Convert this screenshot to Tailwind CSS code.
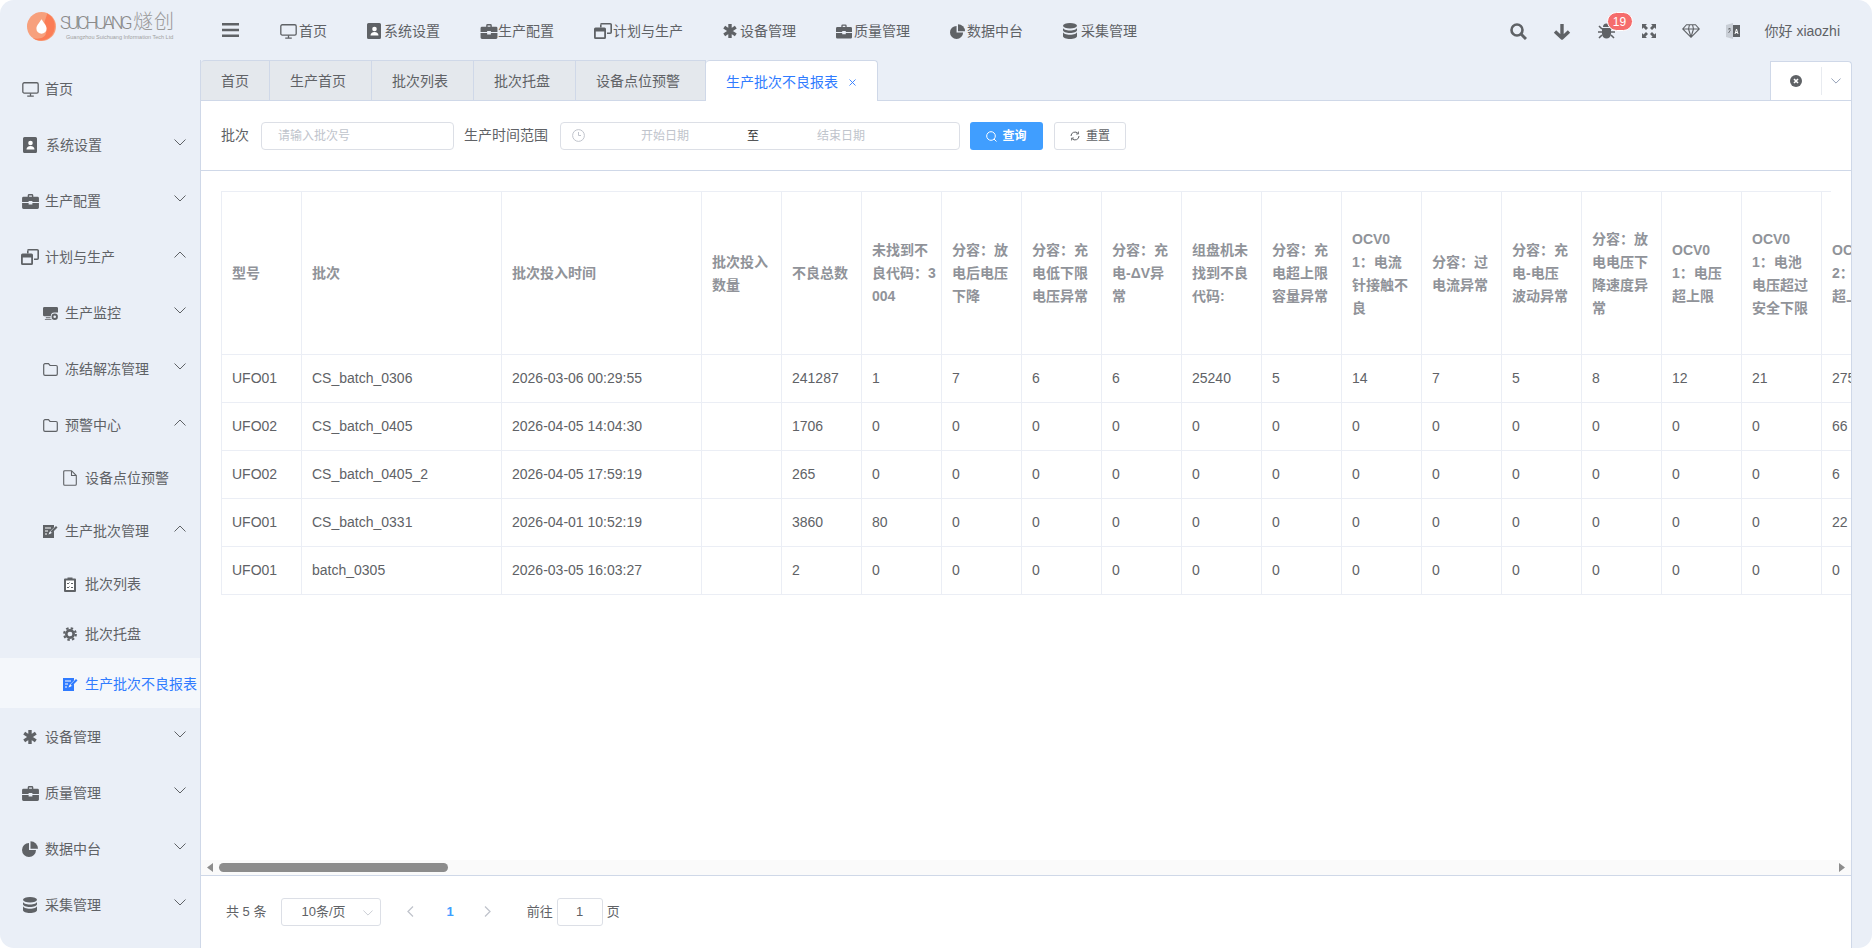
<!DOCTYPE html>
<html lang="zh-CN">
<head>
  <meta charset="UTF-8" />
  <title>生产批次不良报表</title>
  <script src="https://cdn.jsdelivr.net/npm/@tailwindcss/browser@4"></script>
</head>
<body class="bg-white">
  <!-- icon sprites -->
  <svg class="hidden">
    <symbol id="i-monitor" viewBox="0 0 18 16"><rect x="0.8" y="0.8" width="16.4" height="11" rx="1.5" fill="none" stroke="currentColor" stroke-width="1.4"/><path d="M5.5 15h7M9 12v3" fill="none" stroke="currentColor" stroke-width="1.4"/></symbol>
    <symbol id="i-addr" viewBox="0 0 14 16"><path d="M1.5 0h11A1.5 1.5 0 0 1 14 1.5v13a1.5 1.5 0 0 1-1.5 1.5h-11A1.5 1.5 0 0 1 0 14.500v-13A1.500 1.500 0 0 1 1.500 0z" fill="currentColor"/><circle cx="7.500" cy="6" r="2.300" fill="#fff"/><path d="M3.500 12.500c0-2.300 1.700-3.500 4-3.500s4 1.200 4 3.500z" fill="#fff"/></symbol>
    <symbol id="i-case" viewBox="0 0 18 16"><path d="M6 3V1.500A1.500 1.500 0 0 1 7.500 0h3A1.500 1.500 0 0 1 12 1.500V3h4.500A1.500 1.500 0 0 1 18 4.500V8.500H11V7.500H7v1H0V4.500A1.500 1.500 0 0 1 1.500 3zM7.500 1.500V3h3V1.500zM0 9.700h7v1.500h4V9.700h7v4.800a1.500 1.500 0 0 1-1.500 1.500h-15A1.500 1.500 0 0 1 0 14.500z" fill="currentColor" fill-rule="evenodd"/></symbol>
    <symbol id="i-restore" viewBox="0 0 18 16"><path d="M6.800 1.500A1 1 0 0 1 7.800.8h8.400a1 1 0 0 1 1 1v7.400a1 1 0 0 1-1 1H13" fill="none" stroke="currentColor" stroke-width="1.600"/><path d="M6.800 1.500v3" stroke="currentColor" stroke-width="1.600"/><path d="M1.500 4.500h9A1.500 1.500 0 0 1 12 6v8.500a1.500 1.500 0 0 1-1.500 1.500h-9A1.500 1.500 0 0 1 0 14.500V6a1.500 1.500 0 0 1 1.500-1.500zM1.800 8.500v5.700h8.400V8.500z" fill="currentColor" fill-rule="evenodd"/></symbol>
    <symbol id="i-star" viewBox="0 0 14 16"><path d="M7 1v14M1.200 4.200l11.600 7.600M1.200 11.800l11.600-7.600" stroke="currentColor" stroke-width="3.400" fill="none"/></symbol>
    <symbol id="i-pie" viewBox="0 0 16 16"><path d="M7 2a7 7 0 1 0 7 7H7z" fill="currentColor"/><path d="M8.500 0.200A7.500 7.500 0 0 1 16 7.700H8.500z" fill="currentColor"/></symbol>
    <symbol id="i-db" viewBox="0 0 14 16"><ellipse cx="7" cy="2.800" rx="7" ry="2.800" fill="currentColor"/><path d="M0 4.800c0 1.600 3.100 2.700 7 2.700s7-1.100 7-2.700v2.400c0 1.600-3.100 2.700-7 2.700s-7-1.100-7-2.700zM0 9.100c0 1.600 3.100 2.700 7 2.700s7-1.100 7-2.700v4.100c0 1.600-3.100 2.800-7 2.800s-7-1.200-7-2.800z" fill="currentColor"/></symbol>
    <symbol id="i-server" viewBox="0 0 16 16"><path d="M1.500 1h13A1.500 1.500 0 0 1 16 2.500V7h-4a4 4 0 0 0-3.700 4H1.500A1.500 1.500 0 0 1 0 9.500v-7A1.500 1.500 0 0 1 1.500 1zM3 12h5v1H3zM2 14h7v1H2z" fill="currentColor"/><circle cx="12.500" cy="11.500" r="2.400" fill="none" stroke="currentColor" stroke-width="2"/></symbol>
    <symbol id="i-folder" viewBox="0 0 15 13"><path d="M.7 2A1.300 1.300 0 0 1 2 .7h3.500L7 2.500h6A1.300 1.300 0 0 1 14.300 3.800V11A1.300 1.300 0 0 1 13 12.300H2A1.300 1.300 0 0 1 .7 11z" fill="none" stroke="currentColor" stroke-width="1.200"/></symbol>
    <symbol id="i-file" viewBox="0 0 14 16"><path d="M.7 1.700a1 1 0 0 1 1-1h6.800l4.800 4.800v8.800a1 1 0 0 1-1 1H1.700a1 1 0 0 1-1-1zM8.500.7v4.800h4.800" fill="none" stroke="currentColor" stroke-width="1.100"/></symbol>
    <symbol id="i-edit" viewBox="0 0 15 15"><path d="M0 1h11v2.500L6.500 8 5.500 10.500 8 9.500 11 6.500V14H0z" fill="currentColor"/><path d="M2 4h6M2 7h3M2 10h2" stroke="#fff" stroke-width="1"/><path d="M7.500 7.500L13 2l1.500 1.500L9 9z" fill="currentColor"/></symbol>
    <symbol id="i-clip" viewBox="0 0 12 15"><path d="M1 1.500h2.500V.5h5v1H11a1 1 0 0 1 1 1V14a1 1 0 0 1-1 1H1a1 1 0 0 1-1-1V2.500a1 1 0 0 1 1-1z" fill="currentColor"/><rect x="2" y="3.500" width="8" height="9.500" fill="#fff"/><path d="M3 6l1 1 1.500-1.500M3 10l1 1 1.500-1.500M7 6.500h2M7 10.500h2" stroke="currentColor" stroke-width="1" fill="none"/></symbol>
    <symbol id="i-gear" viewBox="0 0 16 16"><circle cx="8" cy="8" r="4.200" fill="none" stroke="currentColor" stroke-width="3"/><circle cx="8" cy="8" r="6.700" fill="none" stroke="currentColor" stroke-width="2.400" stroke-dasharray="2.800 2.460"/></symbol>
    <symbol id="i-chev" viewBox="0 0 12 7"><path d="M.5.500L6 6 11.500.500" fill="none" stroke="currentColor" stroke-width="1"/></symbol>
    <symbol id="i-chevup" viewBox="0 0 12 7"><path d="M.5 6.500L6 1l5.500 5.500" fill="none" stroke="currentColor" stroke-width="1"/></symbol>
  </svg>

  <div class="w-[1872px] h-[948px] overflow-hidden rounded-[14px] bg-[#eaeff7] text-[14px] text-[#606266] font-['Liberation_Sans','Noto_Sans_CJK_SC',sans-serif] flex flex-col">
    <!-- top bar -->
    <header class="h-[60px] shrink-0 flex items-center pl-[27px] pr-[32px] text-[#5f6266]">
      <div class="w-[195px] shrink-0 flex items-center h-full">
        <svg class="w-[29px] h-[29px] shrink-0 mb-[7px]" viewBox="0 0 20 20"><circle cx="10" cy="10" r="10" fill="#f7a07c"/><path d="M14 1a10 10 0 0 1-1 18c-3 1-7 1-9-1 4 1 8 0 9-3 1-3 0-6-1-8z" fill="#fb7d56"/><path d="M10 5c2 3 3.500 4.500 3.500 6.500a3.500 3.500 0 0 1-7 0C6.500 9.500 8 8 10 5z" fill="#fff"/></svg>
        <div class="ml-[4px] mb-[6px] flex flex-col items-start text-[#8b8b8b]">
          <div class="flex items-center h-[18px]"><span class="font-['Roboto'] font-light text-[18px] tracking-[-3.400px] w-[73px] whitespace-nowrap">SUICHUANG</span><span class="text-[20px] text-[#9a9a9a] font-light tracking-[1px] leading-none whitespace-nowrap">燧创</span></div>
          <div class="text-[5.500px] leading-[8px] mt-[2px] ml-[6px] text-[#a0a0a0] whitespace-nowrap">Guangzhou Suichuang Information Tech Ltd</div>
        </div>
      </div>
      <svg class="w-[17px] h-[14px] shrink-0 mr-[41px]" viewBox="0 0 17 14"><path d="M0 1.300h17M0 7h17M0 12.700h17" stroke="currentColor" stroke-width="2.400"/></svg>
      <nav class="flex items-center gap-[40px] pt-[2px]">
        <a class="flex items-center"><svg class="w-[17px] h-[15px] mr-[2px]"><use href="#i-monitor"/></svg>首页</a>
        <a class="flex items-center"><svg class="w-[14px] h-[16px] mr-[3px]"><use href="#i-addr"/></svg>系统设置</a>
        <a class="flex items-center"><svg class="w-[18px] h-[15px]"><use href="#i-case"/></svg>生产配置</a>
        <a class="flex items-center"><svg class="w-[18px] h-[16px] mr-[1px]"><use href="#i-restore"/></svg>计划与生产</a>
        <a class="flex items-center"><svg class="w-[14px] h-[16px] mr-[3px]"><use href="#i-star"/></svg>设备管理</a>
        <a class="flex items-center"><svg class="w-[16px] h-[15px] mr-[2px]"><use href="#i-case"/></svg>质量管理</a>
        <a class="flex items-center"><svg class="w-[15px] h-[15px] mr-[2px]"><use href="#i-pie"/></svg>数据中台</a>
        <a class="flex items-center"><svg class="w-[14px] h-[16px] mr-[4px]"><use href="#i-db"/></svg>采集管理</a>
      </nav>
      <div class="ml-auto flex items-center gap-[26px] pt-[2px]">
        <svg class="w-[17px] h-[17px]" viewBox="0 0 17 17"><circle cx="7" cy="7" r="5.500" fill="none" stroke="currentColor" stroke-width="2.600"/><path d="M11 11l5 5" stroke="currentColor" stroke-width="3"/></svg>
        <svg class="w-[18px] h-[17px] mr-[1px]" viewBox="0 0 18 17"><path d="M9 1v14M2 8.500L9 15l7-6.500" fill="none" stroke="currentColor" stroke-width="3.400" stroke-linejoin="round"/></svg>
        <div class="relative w-[17px] h-[16px]">
          <svg class="w-[17px] h-[16px]" viewBox="0 0 17 16"><path d="M5 4a3.500 3.500 0 0 1 7 0zM4 5h9v6a4.500 4.500 0 0 1-9 0z" fill="currentColor"/><path d="M1 3l3 3M16 3l-3 3M0 9h4M17 9h-4M1 15l3-3M16 15l-3-3" stroke="currentColor" stroke-width="1.600"/></svg>
          <span class="absolute left-[9px] top-[-11px] w-[26px] h-[19px] flex items-center justify-center rounded-full border border-white bg-[#f56c6c] text-white text-[12px]">19</span>
        </div>
        <svg class="w-[14px] h-[14px] ml-[1px]" viewBox="0 0 14 14"><path d="M0 0h5L3.500 1.500 6 4 4 6 1.500 3.500 0 5zM14 0v5l-1.500-1.500L10 6 8 4l2.500-2.500L9 0zM0 14V9l1.500 1.500L4 8l2 2-2.500 2.500L5 14zM14 14H9l1.500-1.500L8 10l2-2 2.500 2.500L14 9z" fill="currentColor"/></svg>
        <svg class="w-[18px] h-[14px]" viewBox="0 0 18 14"><path d="M4.500.7h9L17.300 5 9 13.300.7 5zM.7 5h16.600M6.500 5L9 13M11.500 5L9 13M6.500 5l1-4.300M11.500 5l-1-4.300" fill="none" stroke="currentColor" stroke-width="1.100"/></svg>
        <svg class="w-[14px] h-[16px]" viewBox="0 0 14 16"><path d="M0 2l7-2v16l-7-2z" fill="#c9ced6"/><path d="M7 2h7v12H7z" fill="currentColor"/><path d="M9 11l1.500-5 1.500 5M9.500 9.500h2" stroke="#fff" stroke-width="1" fill="none"/><path d="M2 6h3M3.500 5v1M2.500 10l2-3" stroke="#5f6266" stroke-width=".8" fill="none"/></svg>
        <span class="ml-[-1px] whitespace-nowrap">你好 xiaozhi</span>
      </div>
    </header>

    <div class="flex flex-1 min-h-0 pr-[20px]">
      <!-- side menu -->
      <aside class="w-[201px] shrink-0 border-r border-[#cfd8e8] text-[#5f6266]">
        <a class="h-[56px] pt-[2px] flex items-center pl-[22px]"><svg class="w-[17px] h-[15px] mr-[6px]"><use href="#i-monitor"/></svg>首页</a>
        <a class="h-[56px] pt-[2px] flex items-center pl-[22px]"><svg class="w-[14px] h-[16px] mr-[9px] ml-[1px]"><use href="#i-addr"/></svg><span>系统设置</span><svg class="ml-auto mr-[14px] mb-[6px] w-[12px] h-[7px]"><use href="#i-chev"/></svg></a>
        <a class="h-[56px] pt-[2px] flex items-center pl-[22px]"><svg class="w-[17px] h-[15px] mr-[6px]"><use href="#i-case"/></svg><span>生产配置</span><svg class="ml-auto mr-[14px] mb-[6px] w-[12px] h-[7px]"><use href="#i-chev"/></svg></a>
        <a class="h-[56px] pt-[2px] flex items-center pl-[21px]"><svg class="w-[18px] h-[16px] mr-[6px]"><use href="#i-restore"/></svg><span>计划与生产</span><svg class="ml-auto mr-[14px] mb-[6px] w-[12px] h-[7px]"><use href="#i-chevup"/></svg></a>
        <a class="h-[56px] pt-[2px] flex items-center pl-[43px]"><svg class="w-[15px] h-[15px] mr-[7px]"><use href="#i-server"/></svg><span>生产监控</span><svg class="ml-auto mr-[14px] mb-[6px] w-[12px] h-[7px]"><use href="#i-chev"/></svg></a>
        <a class="h-[56px] pt-[2px] flex items-center pl-[43px]"><svg class="w-[15px] h-[13px] mr-[7px]"><use href="#i-folder"/></svg><span>冻结解冻管理</span><svg class="ml-auto mr-[14px] mb-[6px] w-[12px] h-[7px]"><use href="#i-chev"/></svg></a>
        <a class="h-[56px] pt-[2px] flex items-center pl-[43px]"><svg class="w-[15px] h-[13px] mr-[7px]"><use href="#i-folder"/></svg><span>预警中心</span><svg class="ml-auto mr-[14px] mb-[6px] w-[12px] h-[7px]"><use href="#i-chevup"/></svg></a>
        <a class="h-[50px] pt-[2px] flex items-center pl-[63px]"><svg class="w-[14px] h-[16px] mr-[8px]"><use href="#i-file"/></svg>设备点位预警</a>
        <a class="h-[56px] pt-[2px] flex items-center pl-[43px]"><svg class="w-[15px] h-[15px] mr-[7px]"><use href="#i-edit"/></svg><span>生产批次管理</span><svg class="ml-auto mr-[14px] mb-[6px] w-[12px] h-[7px]"><use href="#i-chevup"/></svg></a>
        <a class="h-[50px] pt-[2px] flex items-center pl-[64px]"><svg class="w-[12px] h-[15px] mr-[9px]"><use href="#i-clip"/></svg>批次列表</a>
        <a class="h-[50px] pt-[2px] flex items-center pl-[63px]"><svg class="w-[14px] h-[14px] mr-[8px]"><use href="#i-gear"/></svg>批次托盘</a>
        <a class="h-[50px] pt-[2px] flex items-center pl-[63px] bg-[#f4f7fb] text-[#2f7bff] whitespace-nowrap"><svg class="w-[15px] h-[15px] mr-[7px]"><use href="#i-edit"/></svg>生产批次不良报表</a>
        <a class="h-[56px] pt-[2px] flex items-center pl-[23px]"><svg class="w-[14px] h-[16px] mr-[8px]"><use href="#i-star"/></svg><span>设备管理</span><svg class="ml-auto mr-[14px] mb-[6px] w-[12px] h-[7px]"><use href="#i-chev"/></svg></a>
        <a class="h-[56px] pt-[2px] flex items-center pl-[22px]"><svg class="w-[17px] h-[15px] mr-[6px]"><use href="#i-case"/></svg><span>质量管理</span><svg class="ml-auto mr-[14px] mb-[6px] w-[12px] h-[7px]"><use href="#i-chev"/></svg></a>
        <a class="h-[56px] pt-[2px] flex items-center pl-[22px]"><svg class="w-[16px] h-[16px] mr-[7px]"><use href="#i-pie"/></svg><span>数据中台</span><svg class="ml-auto mr-[14px] mb-[6px] w-[12px] h-[7px]"><use href="#i-chev"/></svg></a>
        <a class="h-[56px] pt-[2px] flex items-center pl-[23px]"><svg class="w-[14px] h-[16px] mr-[8px]"><use href="#i-db"/></svg><span>采集管理</span><svg class="ml-auto mr-[14px] mb-[6px] w-[12px] h-[7px]"><use href="#i-chev"/></svg></a>
      </aside>

      <main class="flex-1 min-w-0 flex flex-col">
        <!-- tabs -->
        <div class="h-[41px] shrink-0 flex items-stretch border-b border-[#cfd8e8]">
          <a class="pl-[20px] pr-[20px] pt-[2px] flex items-center bg-[#e4e8ed] border-t border-r border-[#cfd8e8] rounded-tl-[4px]">首页</a>
          <a class="pl-[20px] pr-[25px] pt-[2px] flex items-center bg-[#e4e8ed] border-t border-r border-[#cfd8e8]">生产首页</a>
          <a class="pl-[20px] pr-[25px] pt-[2px] flex items-center bg-[#e4e8ed] border-t border-r border-[#cfd8e8]">批次列表</a>
          <a class="pl-[20px] pr-[25px] pt-[2px] flex items-center bg-[#e4e8ed] border-t border-r border-[#cfd8e8]">批次托盘</a>
          <a class="pl-[20px] pr-[25px] pt-[2px] flex items-center bg-[#e4e8ed] border-t border-r border-[#cfd8e8]">设备点位预警</a>
          <a class="w-[172px] pl-[20px] pt-[2px] flex items-center bg-white border-t border-r border-[#cfd8e8] rounded-t-[4px] text-[#2f7bff] mb-[-1px]">生产批次不良报表<svg class="ml-[11px] w-[7px] h-[7px]" viewBox="0 0 7 7"><path d="M.5.500l6 6M6.500.500l-6 6" stroke="currentColor" stroke-width=".9"/></svg></a>
          <div class="ml-auto w-[82px] mt-[1px] flex items-center bg-white border-t border-l border-r border-[#cfd8e8] rounded-tr-[4px]">
            <div class="w-[51px] h-[28px] flex items-center justify-center border-r border-[#e8ebf0]">
              <svg class="w-[12px] h-[12px]" viewBox="0 0 12 12"><circle cx="6" cy="6" r="6" fill="#5f6266"/><path d="M4 4l4 4M8 4l-4 4" stroke="#fff" stroke-width="1.600"/></svg>
            </div>
            <svg class="ml-[9px] w-[10px] h-[6px] text-[#7f8ea8]"><use href="#i-chev"/></svg>
          </div>
        </div>

        <div class="flex-1 min-h-0 flex flex-col bg-white border-r border-[#cfd8e8]">
          <!-- filter -->
          <div class="h-[70px] shrink-0 flex items-center pl-[20px] border-b border-[#cfd8e8]">
            <label class="whitespace-nowrap">批次</label>
            <div class="ml-[12px] w-[193px] h-[28px] flex items-center pl-[16px] border border-[#dcdfe6] rounded-[4px] text-[12px] text-[#c0c4cc]">请输入批次号</div>
            <label class="ml-[10px] whitespace-nowrap">生产时间范围</label>
            <div class="ml-[12px] w-[400px] h-[28px] relative flex items-center border border-[#dcdfe6] rounded-[4px] text-[12px] text-[#c0c4cc]">
              <svg class="ml-[11px] w-[13px] h-[13px]" viewBox="0 0 13 13"><circle cx="6.500" cy="6.500" r="5.900" fill="none" stroke="currentColor"/><path d="M6.500 3v3.500H9" fill="none" stroke="currentColor"/></svg>
              <span class="ml-[56px] w-[106px]">开始日期</span>
              <span class="w-[70px] text-[#303133]">至</span>
              <span>结束日期</span>
            </div>
            <button class="ml-[10px] w-[73px] h-[28px] mt-[1px] flex items-center justify-center bg-[#409eff] text-white text-[12px] font-bold rounded-[3px]"><svg class="w-[11px] h-[11px] mr-[5px]" viewBox="0 0 11 11"><circle cx="5" cy="5" r="4.300" fill="none" stroke="#fff"/><path d="M8 8l2.500 2.500" stroke="#fff"/></svg>查询</button>
            <button class="ml-[11px] w-[72px] h-[28px] mt-[1px] flex items-center justify-center bg-white border border-[#dcdfe6] text-[12px] rounded-[3px]"><svg class="w-[10px] h-[10px] mr-[6px]" viewBox="0 0 10 10"><path d="M1 5a4 4 0 0 1 7-2.600M9 5a4 4 0 0 1-7 2.600" fill="none" stroke="currentColor"/><path d="M8.500.500v2.500H6M1.500 9.500V7H4" fill="none" stroke="currentColor" stroke-width=".8"/></svg>重置</button>
          </div>

          <!-- table -->
          <div class="flex-1 min-h-0 overflow-hidden pt-[20px] pl-[20px]">
            <div class="w-[1610px] h-px bg-[#ebeef5]"></div>
            <table class="table-fixed w-[1680px] border-collapse [&_th]:h-[162px] [&_th]:border-x [&_th]:border-b [&_th]:border-[#ebeef5] [&_th]:pl-[10px] [&_th]:pr-0 [&_th]:pt-[2px] [&_th]:text-left [&_th]:font-bold [&_th]:leading-[23px] [&_th]:text-[#909399] [&_th]:whitespace-nowrap [&_td]:h-[48px] [&_td]:border [&_td]:border-[#ebeef5] [&_td]:px-[10px] [&_td]:whitespace-nowrap [&_td]:overflow-hidden">
              <colgroup>
                <col class="w-[80px]"><col class="w-[200px]"><col class="w-[200px]">
                <col class="w-[80px]"><col class="w-[80px]"><col class="w-[80px]"><col class="w-[80px]"><col class="w-[80px]"><col class="w-[80px]"><col class="w-[80px]"><col class="w-[80px]"><col class="w-[80px]"><col class="w-[80px]"><col class="w-[80px]"><col class="w-[80px]"><col class="w-[80px]"><col class="w-[80px]"><col class="w-[80px]">
              </colgroup>
              <thead>
                <tr>
                  <th>型号</th><th>批次</th><th>批次投入时间</th><th>批次投入<br>数量</th><th>不良总数</th>
                  <th>未找到不<br>良代码：3<br>004</th><th>分容：放<br>电后电压<br>下降</th><th>分容：充<br>电低下限<br>电压异常</th><th>分容：充<br>电-ΔV异<br>常</th>
                  <th>组盘机未<br>找到不良<br>代码:</th><th>分容：充<br>电超上限<br>容量异常</th><th>OCV0<br>1：电流<br>针接触不<br>良</th><th>分容：过<br>电流异常</th>
                  <th>分容：充<br>电-电压<br>波动异常</th><th>分容：放<br>电电压下<br>降速度异<br>常</th><th>OCV0<br>1：电压<br>超上限</th><th>OCV0<br>1：电池<br>电压超过<br>安全下限</th>
                  <th>OCV0<br>2：电压<br>超上限</th>
                </tr>
              </thead>
              <tbody>
                <tr><td>UFO01</td><td>CS_batch_0306</td><td>2026-03-06 00:29:55</td><td></td><td>241287</td><td>1</td><td>7</td><td>6</td><td>6</td><td>25240</td><td>5</td><td>14</td><td>7</td><td>5</td><td>8</td><td>12</td><td>21</td><td>2753</td></tr>
                <tr><td>UFO02</td><td>CS_batch_0405</td><td>2026-04-05 14:04:30</td><td></td><td>1706</td><td>0</td><td>0</td><td>0</td><td>0</td><td>0</td><td>0</td><td>0</td><td>0</td><td>0</td><td>0</td><td>0</td><td>0</td><td>66</td></tr>
                <tr><td>UFO02</td><td>CS_batch_0405_2</td><td>2026-04-05 17:59:19</td><td></td><td>265</td><td>0</td><td>0</td><td>0</td><td>0</td><td>0</td><td>0</td><td>0</td><td>0</td><td>0</td><td>0</td><td>0</td><td>0</td><td>6</td></tr>
                <tr><td>UFO01</td><td>CS_batch_0331</td><td>2026-04-01 10:52:19</td><td></td><td>3860</td><td>80</td><td>0</td><td>0</td><td>0</td><td>0</td><td>0</td><td>0</td><td>0</td><td>0</td><td>0</td><td>0</td><td>0</td><td>22</td></tr>
                <tr><td>UFO01</td><td>batch_0305</td><td>2026-03-05 16:03:27</td><td></td><td>2</td><td>0</td><td>0</td><td>0</td><td>0</td><td>0</td><td>0</td><td>0</td><td>0</td><td>0</td><td>0</td><td>0</td><td>0</td><td>0</td></tr>
              </tbody>
            </table>
          </div>

          <!-- horizontal scrollbar -->
          <div class="h-[16px] shrink-0 flex items-center bg-[#fafafa] border-b border-[#cfd8e8] pl-[6px] pr-[6px]">
            <svg class="w-[6px] h-[9px]" viewBox="0 0 6 9"><path d="M6 0v9L0 4.500z" fill="#8c8c8c"/></svg>
            <div class="ml-[6px] w-[229px] h-[9px] rounded-full bg-[#8c8c8c]"></div>
            <svg class="ml-auto w-[6px] h-[9px]" viewBox="0 0 6 9"><path d="M0 0v9l6-4.500z" fill="#8c8c8c"/></svg>
          </div>

          <!-- pagination -->
          <div class="h-[72px] shrink-0 flex items-center pl-[25px] pb-[1px] text-[13px]">
            <span class="whitespace-nowrap">共 5 条</span>
            <div class="ml-[15px] w-[100px] h-[28px] relative flex items-center pl-[19px] border border-[#dcdfe6] rounded-[3px]">10条/页
              <svg class="absolute right-[7px] top-[11px] w-[10px] h-[6px] text-[#c0c4cc]"><use href="#i-chev"/></svg>
            </div>
            <svg class="ml-[26px] w-[7px] h-[11px] text-[#c0c4cc]" viewBox="0 0 7 11"><path d="M6 .500L1 5.500l5 5" fill="none" stroke="currentColor" stroke-width="1.300"/></svg>
            <span class="ml-[32px] font-bold text-[#409eff]">1</span>
            <svg class="ml-[30px] w-[7px] h-[11px] text-[#c0c4cc]" viewBox="0 0 7 11"><path d="M1 .500l5 5-5 5" fill="none" stroke="currentColor" stroke-width="1.300"/></svg>
            <span class="ml-[36px] whitespace-nowrap">前往</span>
            <div class="ml-[4px] w-[46px] h-[28px] flex items-center justify-center border border-[#dcdfe6] rounded-[3px]">1</div>
            <span class="ml-[4px]">页</span>
          </div>
        </div>
      </main>
    </div>
  </div>
</body>
</html>
